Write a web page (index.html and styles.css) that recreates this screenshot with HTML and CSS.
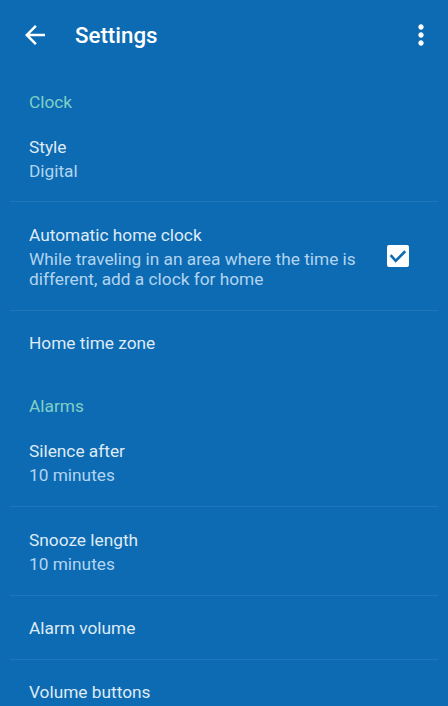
FILE: index.html
```html
<!DOCTYPE html>
<html lang="en">
<head>
<meta charset="utf-8">
<title>Settings</title>
<link rel="stylesheet" href="styles.css">
</head>
<body>
<div class="screen">
  <header class="toolbar">
    <svg class="back" viewBox="0 0 24 24" width="30" height="30" aria-hidden="true">
      <path fill="#ffffff" d="M20 11H7.83l5.59-5.59L12 4l-8 8 8 8 1.41-1.41L7.83 13H20v-2z"/>
    </svg>
    <h1 class="title">Settings</h1>
    <svg class="more" viewBox="0 0 24 24" width="32" height="32" aria-hidden="true">
      <path fill="#ffffff" d="M12 8c1.1 0 2-.9 2-2s-.9-2-2-2-2 .9-2 2 .9 2 2 2zm0 2c-1.1 0-2 .9-2 2s.9 2 2 2 2-.9 2-2-.9-2-2-2zm0 6c-1.1 0-2 .9-2 2s.9 2 2 2 2-.9 2-2-.9-2-2-2z"/>
    </svg>
  </header>

  <main class="list">
    <div class="category first">Clock</div>
    <div class="item">
      <div class="text">
        <div class="item-title">Style</div>
        <div class="summary">Digital</div>
      </div>
    </div>
    <div class="divider"></div>
    <div class="item">
      <div class="text">
        <div class="item-title">Automatic home clock</div>
        <div class="summary">While traveling in an area where the time is different, add a clock for home</div>
      </div>
      <div class="checkbox">
        <svg viewBox="0 0 22 22" width="22" height="22" aria-hidden="true">
          <path d="M4.5 11.2l4.2 4.6 8.6-8.6" fill="none" stroke="#0c6bb2" stroke-width="2.6" stroke-linecap="square"/>
        </svg>
      </div>
    </div>
    <div class="divider"></div>
    <div class="item single">
      <div class="text">
        <div class="item-title">Home time zone</div>
      </div>
    </div>

    <div class="category">Alarms</div>
    <div class="item">
      <div class="text">
        <div class="item-title">Silence after</div>
        <div class="summary">10 minutes</div>
      </div>
    </div>
    <div class="divider"></div>
    <div class="item">
      <div class="text">
        <div class="item-title">Snooze length</div>
        <div class="summary">10 minutes</div>
      </div>
    </div>
    <div class="divider"></div>
    <div class="item single">
      <div class="text">
        <div class="item-title">Alarm volume</div>
      </div>
    </div>
    <div class="divider"></div>
    <div class="item single">
      <div class="text">
        <div class="item-title">Volume buttons</div>
      </div>
    </div>
  </main>
</div>
</body>
</html>
```

FILE: styles.css
```css
html, body {
  margin: 0;
  padding: 0;
  background: #0c6bb2;
}

body {
  font-family: Roboto, "Noto Sans", "Liberation Sans", sans-serif;
  color: #e2edf7;
  width: 448px;
  height: 706px;
  overflow: hidden;
}

.screen {
  display: flex;
  flex-direction: column;
}

.toolbar {
  height: 70px;
  display: flex;
  align-items: center;
  padding: 0 11px 0 20px;
}

.back {
  display: block;
  flex: none;
}

.title {
  margin: 0 0 0 25px;
  font-size: 22.3px;
  font-weight: 500;
  color: #ffffff;
  letter-spacing: 0;
}

.more {
  display: block;
  margin-left: auto;
  flex: none;
}

.list {
  display: flex;
  flex-direction: column;
}

.category {
  padding: 20px 0 0 29px;
  line-height: 24px;
  font-size: 17.3px;
  color: #80cfc7;
}

.category.first {
  padding-top: 20px;
}

.item {
  display: flex;
  align-items: center;
  padding: 21px 39px 21px 29px;
}

.category.first + .item {
  padding-bottom: 20px;
}

.item.single {
  padding-top: 20px;
  padding-bottom: 19px;
}

.text {
  flex: 1;
  min-width: 0;
}

.item-title {
  font-size: 17.3px;
  line-height: 24px;
  color: #dfeaf6;
}

.summary {
  margin-top: 2px;
  font-size: 17.3px;
  line-height: 20px;
  color: #b2d4f1;
  padding-right: 14px;
}

.checkbox {
  flex: none;
  width: 22px;
  height: 22px;
  background: #ffffff;
  border-radius: 2px;
  margin-left: 16px;
}

.checkbox svg {
  display: block;
}

.divider {
  height: 1px;
  margin: 0 10px;
  background: rgba(255, 255, 255, 0.08);
}
```
